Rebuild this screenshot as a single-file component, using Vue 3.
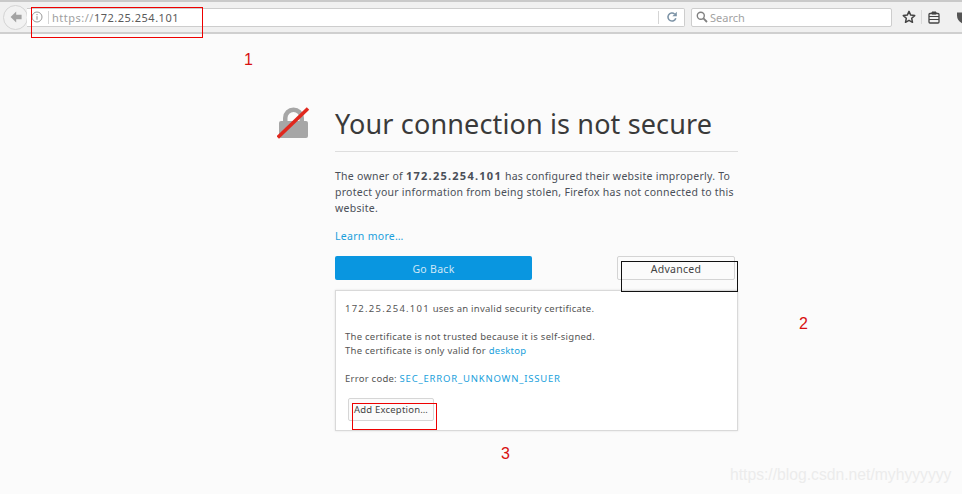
<template>
  <div class="screen">
    <header class="toolbar">
      <button class="back" aria-label="Back">
        <svg width="14" height="14" viewBox="0 0 14 14"><path d="M7.2 1.5 1.6 7l5.6 5.5V9.2h5.4V4.8H7.2z" fill="#a3a3a3" /></svg>
      </button>
      <div class="urlbar">
        <svg class="info" width="12" height="12" viewBox="0 0 12 12">
          <circle cx="6" cy="6" r="5" fill="none" stroke="#9a9a9a" />
          <path d="M6 5.2v3.6M6 3v1.2" stroke="#8a8a8a" />
        </svg>
        <span class="sep"></span>
        <span class="url"><span class="scheme">https://</span>172.25.254.101</span>
        <span class="sep sep-right"></span>
        <svg class="reload" width="12" height="12" viewBox="0 0 12 12">
          <path d="M9.8 7.2A4 4 0 1 1 8.6 3" fill="none" stroke="#7c93a6" stroke-width="1.6" />
          <path d="M10.8 .8v4.4H6.4z" fill="#7c93a6" />
        </svg>
      </div>
      <div class="search">
        <svg width="12" height="12" viewBox="0 0 12 12">
          <circle cx="4.8" cy="4.8" r="3.5" fill="none" stroke="#808080" stroke-width="1.4" />
          <path d="M7.4 7.4l3.6 3.6" stroke="#808080" stroke-width="1.8" />
        </svg>
        <span>Search</span>
      </div>
      <svg class="star" width="14" height="14" viewBox="0 0 14 14">
        <path d="M7 1.4l1.7 3.7 4 .5-3 2.7.8 4L7 10.3l-3.5 2 .8-4-3-2.7 4-.5z" fill="none" stroke="#444" stroke-width="1.5" stroke-linejoin="round" />
      </svg>
      <span class="tool-sep"></span>
      <svg class="clip" width="12" height="13" viewBox="0 0 12 13">
        <rect x="1" y="2.5" width="10" height="9.5" rx="1" fill="none" stroke="#444" stroke-width="1.3" />
        <path d="M4 1h4v2H4zM1 5.5h10M1 8.5h10" stroke="#444" fill="#444" />
      </svg>
      <svg class="shield" width="8" height="13" viewBox="0 0 8 13">
        <path d="M0 1.5h8v11H5.5C2 11 0 8 0 4.500z" fill="#555" />
      </svg>
    </header>

    <main class="page">
      <div class="lock">
        <svg width="34" height="34" viewBox="0 0 34 34">
          <path d="M6 15v-4a10.500 10.500 0 0 1 21 0V15h-4.500v-4a6 6 0 0 0-12 0V15z" fill="#a6a6a6" />
          <rect x="2" y="14" width="29" height="17" rx="2" fill="#a6a6a6" />
          <path d="M.8 30.500 31 1.500" stroke="#e0281e" stroke-width="3.500" />
        </svg>
      </div>
      <div class="content">
        <h1>Your connection is not secure</h1>
        <p class="desc">
          The owner of <b>172.25.254.101</b> has configured their website improperly. To protect your information from being stolen, Firefox has not connected to this website.
        </p>
        <a class="link learn">Learn more…</a>
        <div class="actions">
          <button class="primary">Go Back</button>
          <button class="advanced">Advanced</button>
        </div>
        <section class="panel">
          <p><span class="host">172.25.254.101</span> uses an invalid security certificate.</p>
          <p>The certificate is not trusted because it is self-signed.<br />The certificate is only valid for <a class="link">desktop</a></p>
          <p>Error code: <a class="link code">SEC_ERROR_UNKNOWN_ISSUER</a></p>
          <button class="exception">Add Exception…</button>
        </section>
      </div>
    </main>

    <!-- annotations pasted over the screenshot -->
    <i class="box box-url"></i>
    <i class="box box-adv"></i>
    <i class="box box-add"></i>
    <span class="num num-1">1</span>
    <span class="num num-2">2</span>
    <span class="num num-3">3</span>
    <span class="watermark">https://blog.csdn.net/myhyyyyyy</span>
  </div>
</template>

<script setup>
</script>

<style>
html,
body {
  margin: 0;
  overflow: hidden;
}
</style>

<style scoped>
.screen {
  position: relative;
  width: 962px;
  height: 494px;
  overflow: hidden;
  background: #fbfbfb;
  font-family: "Noto Sans", sans-serif;
  color: #4a4f58;
}

.toolbar {
  display: flex;
  align-items: center;
  box-sizing: border-box;
  height: 34px;
  padding: 0 0 0 3px;
  background: #f0f0f0;
  border-top: 2px solid #c9c9c9;
  border-bottom: 2px solid #cfcfcf;
}

.toolbar > * {
  flex: none;
}

.back {
  display: flex;
  align-items: center;
  justify-content: center;
  width: 25px;
  height: 25px;
  padding: 0;
  margin-right: -1px;
  background: #f2f2f2;
  border: 1px solid #d4d4d4;
  border-radius: 50%;
}

.urlbar {
  display: flex;
  align-items: center;
  box-sizing: border-box;
  width: 658px;
  height: 19px;
  padding: 0 6px 0 4px;
  background: #fff;
  border: 1px solid #cdcdcd;
  border-left: none;
  border-radius: 0 2px 2px 0;
}

.info {
  flex: none;
}

.sep {
  width: 1px;
  height: 13px;
  margin: 0 3px 0 5px;
  background: #d5d5d5;
}

.url {
  flex: 1;
  font-size: 11px;
  letter-spacing: 0.5px;
  color: #5a5a5a;
}

.scheme {
  color: #a0a0a0;
}

.sep-right {
  margin: 0 7px 0 0;
}

.search {
  display: flex;
  align-items: center;
  gap: 2px;
  box-sizing: border-box;
  width: 201px;
  height: 19px;
  margin-left: 6px;
  padding-left: 4px;
  background: #fff;
  border: 1px solid #cdcdcd;
  border-radius: 2px;
  font-size: 11px;
  color: #a2a2a2;
}

.star {
  margin-left: 10px;
}

.tool-sep {
  width: 1px;
  height: 14px;
  margin: 0 6px 0 5px;
  background: #d8d8d8;
}

.shield {
  margin-left: 17px;
}

.page {
  display: flex;
  padding: 73px 0 0 277px;
}

.lock {
  flex: none;
  width: 58px;
}

.content {
  box-sizing: border-box;
  width: 403px;
}

h1 {
  margin: 0;
  height: 45px;
  box-sizing: border-box;
  border-bottom: 1px solid #dedede;
  font-size: 27px;
  font-weight: 400;
  line-height: 34px;
  letter-spacing: 0.14px;
  color: #3a3a3a;
  white-space: nowrap;
}

.desc {
  margin: 16px 0 0;
  font-size: 10.5px;
  line-height: 16px;
  letter-spacing: 0.26px;
}

.desc b {
  font-size: 11px;
  letter-spacing: 1.25px;
}

.link {
  color: #1a9fdc;
}

.learn {
  display: block;
  margin-top: 11.5px;
  font-size: 10.5px;
  line-height: 16px;
  letter-spacing: 0.3px;
}

.actions {
  display: flex;
  justify-content: space-between;
  margin-top: 12px;
  padding-right: 3px;
}

button {
  font-family: inherit;
}

.primary {
  width: 197px;
  height: 24px;
  padding: 2px 0 0;
  background: #0996e0;
  border: none;
  border-radius: 2px;
  color: #cfe8f7;
  font-size: 10.5px;
  letter-spacing: 0.3px;
}

.advanced {
  width: 118px;
  height: 24px;
  padding: 2px 0 0;
  background: #fbfbfb;
  border: 1px solid #d4d4d4;
  border-radius: 2px;
  color: #444;
  font-size: 10.5px;
  letter-spacing: 0.3px;
}

.panel {
  box-sizing: border-box;
  height: 141px;
  margin-top: 10px;
  padding: 11px 9px 0;
  background: #fff;
  border: 1px solid #d9d9d9;
  box-shadow: 0 0 2px #e0e0e0;
  font-size: 9.500px;
  line-height: 14px;
  letter-spacing: 0.25px;
  color: #555;
}

.panel p {
  margin: 0 0 14px;
}

.host {
  letter-spacing: 1.25px;
}

.code {
  letter-spacing: 0.8px;
}

.exception {
  display: block;
  box-sizing: border-box;
  width: 86px;
  height: 23px;
  margin: -2px 0 0 3px;
  padding: 0 0 0 5px;
  background: #fbfbfb;
  border: 1px solid #d6d6d6;
  border-radius: 2px;
  text-align: left;
  font-size: 9.500px;
  letter-spacing: 0.2px;
  color: #444;
}

.box {
  position: absolute;
  box-sizing: border-box;
}

.box-url {
  left: 31px;
  top: 7px;
  width: 172px;
  height: 31px;
  border: 1px solid #e00;
}

.box-adv {
  left: 621px;
  top: 261px;
  width: 117px;
  height: 31px;
  border: 1px solid #111;
}

.box-add {
  left: 352px;
  top: 403px;
  width: 85px;
  height: 27px;
  border: 1px solid #e00;
}

.num {
  position: absolute;
  font-family: "Liberation Sans", sans-serif;
  font-size: 16px;
  line-height: 18px;
  color: #d81010;
}

.num-1 {
  left: 244px;
  top: 51px;
}

.num-2 {
  left: 799px;
  top: 315px;
}

.num-3 {
  left: 501px;
  top: 445px;
}

.watermark {
  position: absolute;
  left: 730px;
  top: 465px;
  font-family: "Liberation Sans", sans-serif;
  font-size: 15.700px;
  line-height: 20px;
  color: #ececec;
  white-space: nowrap;
}
</style>
